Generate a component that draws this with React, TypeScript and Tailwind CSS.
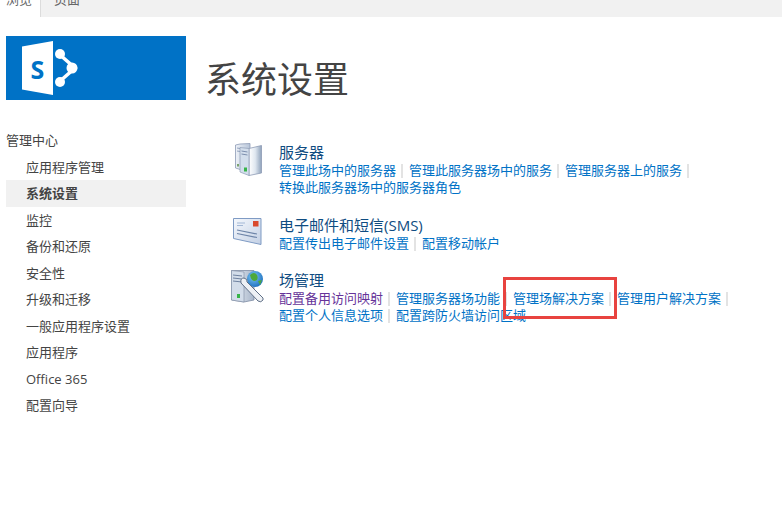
import React from 'react';

const navItems = ['应用程序管理', '系统设置', '监控', '备份和还原', '安全性', '升级和迁移', '一般应用程序设置', '应用程序', 'Office 365', '配置向导'];

const LogoIcon = () => (
  <svg width="60" height="56" viewBox="0 0 60 56" className="ml-[16px]">
    <polygon points="0,6.5 31,1 31,55 0,49.5" fill="#fff" />
    <text x="8.5" y="39" fontSize="25" fontWeight="700" fill="#0072c6" fontFamily="'Open Sans', sans-serif">S</text>
    <path d="M37 14 L53 28 L37 42" fill="none" stroke="#fff" strokeWidth="3.5" />
    <circle cx="38" cy="14" r="5" fill="#fff" />
    <circle cx="38" cy="42" r="5" fill="#fff" />
    <circle cx="50" cy="28" r="5.5" fill="#fff" />
  </svg>
);

const ServerIcon = () => (
  <svg width="27" height="33" viewBox="0 0 27 33" className="ml-[3px] mt-px">
    <defs>
      <linearGradient id="srv" x1="0" y1="0" x2="1" y2="0">
        <stop offset="0" stopColor="#eef2f8" />
        <stop offset="1" stopColor="#b6c4d8" />
      </linearGradient>
      <linearGradient id="side" x1="0" y1="0" x2="1" y2="0">
        <stop offset="0" stopColor="#ffffff" />
        <stop offset="0.5" stopColor="#dfe7f0" />
        <stop offset="1" stopColor="#8fa2bb" />
      </linearGradient>
    </defs>
    <polygon points="0.5,2 5,1 15,0.5 15,26 10,28 0.5,25" fill="url(#srv)" stroke="#8d9bb5" strokeWidth="0.8" />
    <path d="M2 5 L5 5.5 M2 8 L5 8.5" stroke="#7d8fae" strokeWidth="0.8" />
    <rect x="2" y="21" width="2" height="2.5" fill="#7ba36e" />
    <polygon points="14,5.5 26.5,2.5 26.5,30 14,32.5" fill="url(#side)" stroke="#8d9bb5" strokeWidth="0.8" />
    <polygon points="5,4.5 14,5.5 14,32.5 5,29" fill="#d3deec" stroke="#8d9bb5" strokeWidth="0.7" />
    <path d="M6.5 8 L12.5 9 M6.5 11 L12.5 12" stroke="#7d8fae" strokeWidth="1" />
    <rect x="9" y="24.5" width="3" height="4" fill="#38b44a" />
  </svg>
);

const MailIcon = () => (
  <svg width="29" height="27" viewBox="0 0 29 27" className="ml-px mt-[3px]">
    <defs>
      <linearGradient id="env" x1="0" y1="0" x2="1" y2="1">
        <stop offset="0" stopColor="#f5f8fd" />
        <stop offset="1" stopColor="#c3d0e4" />
      </linearGradient>
    </defs>
    <polygon points="0.5,0.5 28,0.5 28,26.5 0.5,20.5" fill="url(#env)" stroke="#7f9bc4" strokeWidth="1" />
    <rect x="20" y="3" width="5.5" height="5.5" fill="#d9492c" />
    <path d="M4 5 L12 5 M4 7.5 L10 7.5" stroke="#a3b8d6" strokeWidth="1" />
    <path d="M4 12 L24 16 M4 15.5 L24 19.5" stroke="#6d84a8" strokeWidth="1.2" />
  </svg>
);

const FarmIcon = () => (
  <svg width="33" height="33" viewBox="0 0 33 33" className="-ml-px">
    <defs>
      <linearGradient id="tower" x1="0" y1="0" x2="1" y2="0">
        <stop offset="0" stopColor="#eef2f7" />
        <stop offset="1" stopColor="#a8b6ca" />
      </linearGradient>
      <radialGradient id="globe" cx="0.4" cy="0.35" r="0.7">
        <stop offset="0" stopColor="#7cc6f2" />
        <stop offset="1" stopColor="#1c6fc0" />
      </radialGradient>
    </defs>
    <polygon points="0.5,0.5 23,0.5 23,30 13,32 0.5,30" fill="url(#tower)" stroke="#7d8ba3" strokeWidth="0.8" />
    <polygon points="0.5,0.5 13,2 13,32 0.5,30" fill="#d3ddea" stroke="#7d8ba3" strokeWidth="0.6" />
    <path d="M2 5 L11 6 M2 8 L11 9 M2 11 L11 12" stroke="#6f82a0" strokeWidth="1" />
    <rect x="6" y="24" width="3" height="4" fill="#38b44a" />
    <circle cx="24" cy="9" r="8" fill="url(#globe)" />
    <path d="M19 5 Q23 1 26 5 Q28 10 24 11 Q20 11 19 5 M27 11 L31 10 L29 15 Z" fill="#4ea83c" />
    <path d="M13 8 Q9 8 10 13 L27 31 Q30 33 32 30 Q33 28 30 26 L16 12 Q17 9 13 8 Z" fill="#eef1f5" stroke="#5f6f86" strokeWidth="1" />
  </svg>
);

type LinkItem = { label: string; visited?: boolean };

const Section = ({ icon, title, links, className }: { icon: React.ReactNode; title: string; links: LinkItem[]; className: string }) => (
  <div className={`flex ${className}`}>
    <div className="w-[47px] shrink-0">{icon}</div>
    <div className="w-[460px]">
      <div className="text-[15px] leading-[20px] text-[#0f4c81]">{title}</div>
      <div className="flex flex-wrap text-[13px] leading-[17px]">
        {links.map((link, i) => (
          <span key={link.label} className="flex items-center">
            <span className={link.visited ? 'text-[#663399]' : 'text-[#0072c6]'}>{link.label}</span>
            {i < links.length - 1 && <span className="ml-[5px] mr-[6px] w-[2px] h-[14px] bg-[#e3e3e3]" />}
          </span>
        ))}
      </div>
    </div>
  </div>
);

export default function App() {
  return (
    <div className="relative w-[782px] h-[519px] overflow-hidden bg-white font-['Open_Sans','Noto_Sans_CJK_SC',sans-serif]">
      <div className="flex h-[17px] bg-[#f1f1f1] text-[13px] leading-[17px] text-[#666] overflow-hidden">
        <div className="w-[41px] bg-white border-r border-[#dcdcdc] pl-[6px] -mt-[9px] h-[26px] pt-0">浏览</div>
        <div className="pl-[13px] -mt-[9px]">页面</div>
      </div>

      <div className="flex">
        <aside className="w-[180px] ml-[6px] mt-[19px] shrink-0">
          <div className="h-[64px] bg-[#0072c6] flex items-center"><LogoIcon /></div>
          <div className="mt-[27px] text-[13px] leading-[26px] text-[#444]">
            <div className="h-[26.5px]">管理中心</div>
            {navItems.map((item) => (
              <div key={item} className={`pl-[20px] h-[26.5px] ${item === '系统设置' ? 'bg-[#f1f1f1] font-bold' : ''}`}>{item}</div>
            ))}
          </div>
        </aside>

        <main className="pl-[19px] pt-[36px]">
          <h1 className="text-[36px] leading-[54px] text-[#444] font-normal">系统设置</h1>
          <div className="ml-[26px] mt-[35px] pl-px">
            <Section
              className="h-[73px]"
              icon={<ServerIcon />}
              title="服务器"
              links={[
                { label: '管理此场中的服务器' },
                { label: '管理此服务器场中的服务' },
                { label: '管理服务器上的服务' },
                { label: '转换此服务器场中的服务器角色' },
              ]}
            />
            <Section
              className="h-[55px]"
              icon={<MailIcon />}
              title="电子邮件和短信(SMS)"
              links={[{ label: '配置传出电子邮件设置' }, { label: '配置移动帐户' }]}
            />
            <Section
              className="h-[60px]"
              icon={<FarmIcon />}
              title="场管理"
              links={[
                { label: '配置备用访问映射', visited: true },
                { label: '管理服务器场功能' },
                { label: '管理场解决方案' },
                { label: '管理用户解决方案' },
                { label: '配置个人信息选项' },
                { label: '配置跨防火墙访问区域' },
              ]}
            />
          </div>
        </main>
      </div>

      <div className="absolute left-[503px] top-[277px] w-[114px] h-[42px] border-[3px] border-[#e8433f]" />
    </div>
  );
}
